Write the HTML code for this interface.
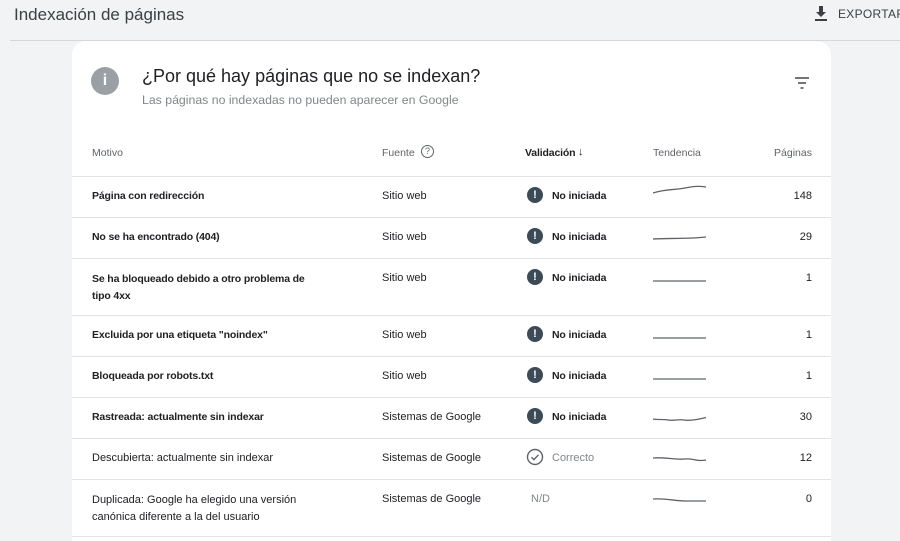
<!DOCTYPE html><html><head><meta charset="utf-8"><style>
body{margin:0;width:900px;height:538px;background:#f1f3f4;font-family:"Liberation Sans",sans-serif;position:relative;overflow:hidden;color:#202124}
.a{position:absolute;white-space:nowrap}
.t{font-size:11px;line-height:14px}
.b{font-weight:bold;color:#202124;font-size:10.5px;letter-spacing:-0.15px}
.g{color:#5f6368}
.line{position:absolute;left:72px;width:759px;height:1px;background:#e3e3e3}
.ic{position:absolute;width:16px;height:16px;border-radius:50%;background:#3c4b55;color:#fff;font-weight:bold;font-size:11px;line-height:16px;text-align:center}
</style></head><body>
<div class="a" style="left:14px;top:5px;font-size:17px;color:#3c4043">Indexación de páginas</div>
<svg class="a" style="left:814px;top:6px" width="14" height="16" viewBox="0 0 14 16"><path d="M5 0h4v6h3l-5 5-5-5h3z M1 13h12v2H1z" fill="#3c4043"/></svg>
<div class="a" style="left:838px;top:7px;font-size:12px;color:#3c4043;letter-spacing:.3px">EXPORTAR</div>
<div class="a" style="left:10px;top:40px;width:890px;height:1px;background:#d5d7da"></div>
<div class="a" style="left:72px;top:41px;width:759px;height:500px;background:#fff;border-radius:14px 14px 0 0"></div>
<div class="a" style="left:91px;top:67px;width:28px;height:28px;border-radius:50%;background:#9aa0a6;color:#fff;font-weight:bold;font-size:16px;line-height:28px;text-align:center">i</div>
<div class="a" style="left:142px;top:66px;font-size:18px;color:#202124">¿Por qué hay páginas que no se indexan?</div>
<div class="a" style="left:142px;top:93px;font-size:12.3px;color:#80868b">Las páginas no indexadas no pueden aparecer en Google</div>
<svg class="a" style="left:794px;top:77px" width="16" height="12"><path d="M1 1h14M4 6h8M6.5 11h3" stroke="#5f6368" stroke-width="1.8"/></svg>
<div class="a t g" style="left:92px;top:146px;font-size:10.5px">Motivo</div>
<div class="a t g" style="left:382px;top:146px;font-size:10.5px">Fuente</div>
<div class="a" style="left:421px;top:145px;width:11px;height:11px;border:1.2px solid #5f6368;border-radius:50%;font-size:9px;line-height:11px;text-align:center;color:#5f6368">?</div>
<div class="a t b" style="left:525px;top:146px">Validación</div>
<div class="a t" style="left:578px;top:145px;color:#202124">↓</div>
<div class="a t g" style="left:653px;top:146px;font-size:10.5px">Tendencia</div>
<div class="a t g" style="left:700px;top:146px;width:112px;text-align:right;font-size:10.5px">Páginas</div>
<div class="line" style="top:176px"></div>
<div class="line" style="top:217px"></div>
<div class="line" style="top:258px"></div>
<div class="line" style="top:315px"></div>
<div class="line" style="top:356px"></div>
<div class="line" style="top:397px"></div>
<div class="line" style="top:438px"></div>
<div class="line" style="top:479px"></div>
<div class="line" style="top:536px"></div>

<div class="a t b" style="left:92px;top:189px">Página con redirección</div>
<div class="a t b" style="left:92px;top:230px">No se ha encontrado (404)</div>
<div class="a t b" style="left:92px;top:271px;line-height:17px">Se ha bloqueado debido a otro problema de<br>tipo 4xx</div>
<div class="a t b" style="left:92px;top:328px">Excluida por una etiqueta "noindex"</div>
<div class="a t b" style="left:92px;top:369px">Bloqueada por robots.txt</div>
<div class="a t b" style="left:92px;top:410px">Rastreada: actualmente sin indexar</div>
<div class="a t" style="left:92px;top:451px">Descubierta: actualmente sin indexar</div>
<div class="a t" style="left:92px;top:492px;line-height:17px">Duplicada: Google ha elegido una versión<br>canónica diferente a la del usuario</div>

<div class="a t" style="left:382px;top:189px">Sitio web</div>
<div class="a t" style="left:382px;top:230px">Sitio web</div>
<div class="a t" style="left:382px;top:271px">Sitio web</div>
<div class="a t" style="left:382px;top:328px">Sitio web</div>
<div class="a t" style="left:382px;top:369px">Sitio web</div>
<div class="a t" style="left:382px;top:410px">Sistemas de Google</div>
<div class="a t" style="left:382px;top:451px">Sistemas de Google</div>
<div class="a t" style="left:382px;top:492px">Sistemas de Google</div>

<div class="ic" style="left:527px;top:187px">!</div><div class="a t b" style="left:552px;top:189px">No iniciada</div>
<div class="ic" style="left:527px;top:228px">!</div><div class="a t b" style="left:552px;top:230px">No iniciada</div>
<div class="ic" style="left:527px;top:269px">!</div><div class="a t b" style="left:552px;top:271px">No iniciada</div>
<div class="ic" style="left:527px;top:326px">!</div><div class="a t b" style="left:552px;top:328px">No iniciada</div>
<div class="ic" style="left:527px;top:367px">!</div><div class="a t b" style="left:552px;top:369px">No iniciada</div>
<div class="ic" style="left:527px;top:408px">!</div><div class="a t b" style="left:552px;top:410px">No iniciada</div>
<svg class="a" style="left:526px;top:448px" width="18" height="18"><circle cx="9" cy="9" r="7.5" fill="none" stroke="#5f6368" stroke-width="1.4"/><path d="M5.5 9.2l2.4 2.4 4.6-4.8" fill="none" stroke="#5f6368" stroke-width="1.4"/></svg>
<div class="a t" style="left:552px;top:451px;color:#80868b">Correcto</div>
<div class="a t" style="left:531px;top:492px;color:#80868b">N/D</div>

<svg class="a" style="left:650px;top:180px" width="60" height="340" fill="none" stroke="#5f6368" stroke-width="1.3">
<path d="M3 13C15 9 25 10 35 8S50 6 56 7"/>
<path d="M3 59C20 58 40 59 56 57"/>
<path d="M3 101H56"/>
<path d="M3 158H56"/>
<path d="M3 199H56"/>
<path d="M3 239C8 240 12 239 18 240S28 239 34 240 50 239 56 237.5"/>
<path d="M3 278C15 277 25 280 35 279S45 282 56 280"/>
<path d="M3 319C15 318 25 321 35 321S48 321 56 321"/>
</svg>

<div class="a t" style="left:700px;top:189px;width:112px;text-align:right">148</div>
<div class="a t" style="left:700px;top:230px;width:112px;text-align:right">29</div>
<div class="a t" style="left:700px;top:271px;width:112px;text-align:right">1</div>
<div class="a t" style="left:700px;top:328px;width:112px;text-align:right">1</div>
<div class="a t" style="left:700px;top:369px;width:112px;text-align:right">1</div>
<div class="a t" style="left:700px;top:410px;width:112px;text-align:right">30</div>
<div class="a t" style="left:700px;top:451px;width:112px;text-align:right">12</div>
<div class="a t" style="left:700px;top:492px;width:112px;text-align:right">0</div>
</body></html>
